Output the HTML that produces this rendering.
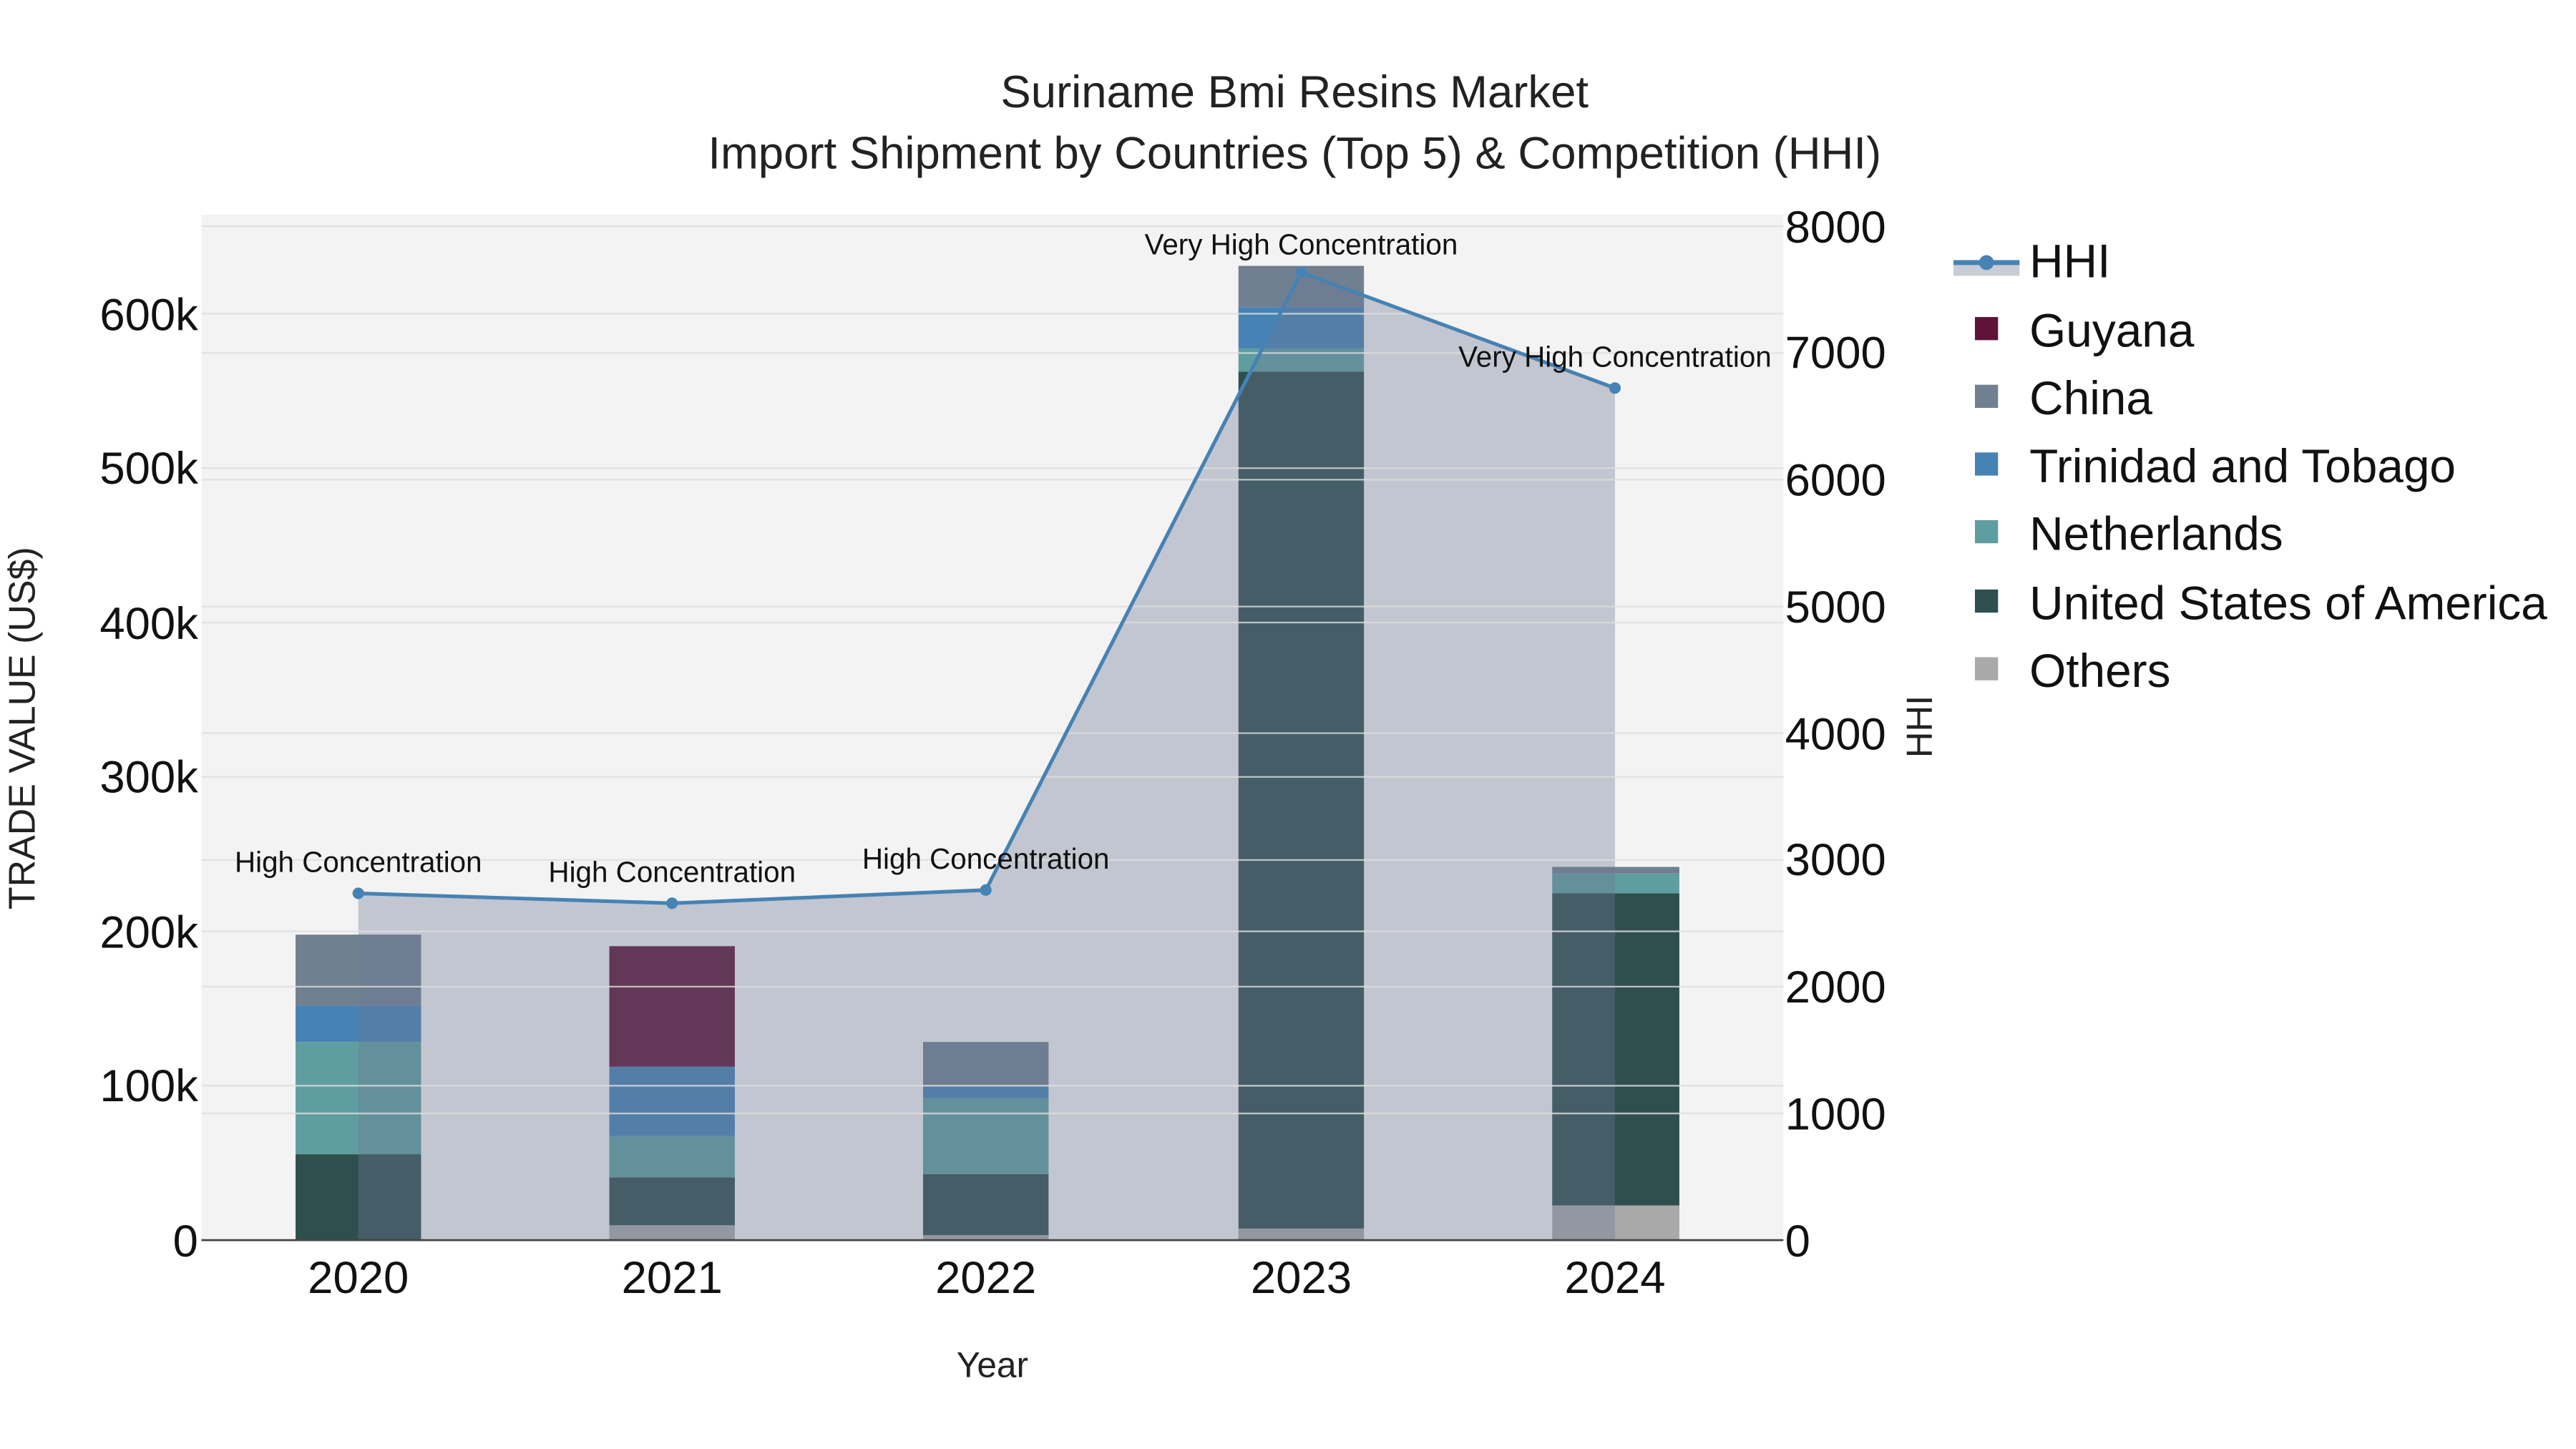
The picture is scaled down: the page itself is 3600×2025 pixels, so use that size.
<!DOCTYPE html>
<html><head><meta charset="utf-8"><style>
html,body{margin:0;padding:0;background:#fff;}
svg{display:block;font-family:"Liberation Sans",sans-serif;}
</style></head><body>
<svg width="3600" height="2025" viewBox="0 0 1560 877.5" xmlns="http://www.w3.org/2000/svg">
<rect width="1560" height="877.5" fill="#fff"/>
<rect x="122" y="130" width="958" height="621" fill="#f3f3f3"/>
<g>
<rect x="179" y="699" width="76" height="52" fill="#2f4f4f"/>
<rect x="179" y="631" width="76" height="68" fill="#5f9ea0"/>
<rect x="179" y="609" width="76" height="22" fill="#4682b4"/>
<rect x="179" y="566" width="76" height="43" fill="#708090"/>
<rect x="369" y="742" width="76" height="9" fill="#a9a9a9"/>
<rect x="369" y="713" width="76" height="29" fill="#2f4f4f"/>
<rect x="369" y="688" width="76" height="25" fill="#5f9ea0"/>
<rect x="369" y="646" width="76" height="42" fill="#4682b4"/>
<rect x="369" y="573" width="76" height="73" fill="#5e1336"/>
<rect x="559" y="748" width="76" height="3" fill="#a9a9a9"/>
<rect x="559" y="711" width="76" height="37" fill="#2f4f4f"/>
<rect x="559" y="665" width="76" height="46" fill="#5f9ea0"/>
<rect x="559" y="658" width="76" height="7" fill="#4682b4"/>
<rect x="559" y="631" width="76" height="27" fill="#708090"/>
<rect x="750" y="744" width="76" height="7" fill="#a9a9a9"/>
<rect x="750" y="225" width="76" height="519" fill="#2f4f4f"/>
<rect x="750" y="211" width="76" height="14" fill="#5f9ea0"/>
<rect x="750" y="186" width="76" height="25" fill="#4682b4"/>
<rect x="750" y="161" width="76" height="25" fill="#708090"/>
<rect x="940" y="730" width="77" height="21" fill="#a9a9a9"/>
<rect x="940" y="541" width="77" height="189" fill="#2f4f4f"/>
<rect x="940" y="529" width="77" height="12" fill="#5f9ea0"/>
<rect x="940" y="525" width="77" height="4" fill="#708090"/>
</g>
<polygon points="217,541 407,547 597,539 788,165 978,235 978,751 217,751" fill="rgb(108,120,146)" fill-opacity="0.36"/>
<g stroke="#dedede" stroke-width="1" opacity="0.8">
<line x1="122" x2="1080" y1="657.5" y2="657.5"/>
<line x1="122" x2="1080" y1="564" y2="564"/>
<line x1="122" x2="1080" y1="470.5" y2="470.5"/>
<line x1="122" x2="1080" y1="377" y2="377"/>
<line x1="122" x2="1080" y1="283.5" y2="283.5"/>
<line x1="122" x2="1080" y1="190" y2="190"/>
<line x1="122" x2="1080" y1="674.3" y2="674.3"/>
<line x1="122" x2="1080" y1="597.5" y2="597.5"/>
<line x1="122" x2="1080" y1="520.8" y2="520.8"/>
<line x1="122" x2="1080" y1="444" y2="444"/>
<line x1="122" x2="1080" y1="367.3" y2="367.3"/>
<line x1="122" x2="1080" y1="290.5" y2="290.5"/>
<line x1="122" x2="1080" y1="213.8" y2="213.8"/>
<line x1="122" x2="1080" y1="137" y2="137"/>
</g>
<line x1="122" x2="1080" y1="751" y2="751" stroke="#444" stroke-width="1.2"/>
<polyline points="217,541 407,547 597,539 788,165 978,235" fill="none" stroke="#4682b4" stroke-width="2.2"/>
<g fill="#4682b4"><circle cx="217" cy="541" r="3.5"/><circle cx="407" cy="547" r="3.5"/><circle cx="597" cy="539" r="3.5"/><circle cx="788" cy="165" r="3.5"/><circle cx="978" cy="235" r="3.5"/></g>
<g font-size="17.5" fill="#111" text-anchor="middle">
<text x="217" y="528">High Concentration</text>
<text x="407" y="534">High Concentration</text>
<text x="597" y="526">High Concentration</text>
<text x="788" y="154">Very High Concentration</text>
<text x="978" y="222">Very High Concentration</text>
</g>
<g font-size="27.5" fill="#222" text-anchor="middle">
<text x="784" y="65">Suriname Bmi Resins Market</text>
<text x="784" y="102">Import Shipment by Countries (Top 5) &amp; Competition (HHI)</text>
</g>
<g font-size="27.5" fill="#111" text-anchor="end">
<text x="120" y="761">0</text>
<text x="120" y="667">100k</text>
<text x="120" y="574">200k</text>
<text x="120" y="480">300k</text>
<text x="120" y="387">400k</text>
<text x="120" y="293">500k</text>
<text x="120" y="200">600k</text>
</g>
<g font-size="27.5" fill="#111">
<text x="1081" y="761">0</text>
<text x="1081" y="684">1000</text>
<text x="1081" y="607">2000</text>
<text x="1081" y="530">3000</text>
<text x="1081" y="454">4000</text>
<text x="1081" y="377">5000</text>
<text x="1081" y="300">6000</text>
<text x="1081" y="223">7000</text>
<text x="1081" y="147">8000</text>
</g>
<g font-size="27.5" fill="#111" text-anchor="middle">
<text x="217" y="783">2020</text>
<text x="407" y="783">2021</text>
<text x="597" y="783">2022</text>
<text x="788" y="783">2023</text>
<text x="978" y="783">2024</text>
</g>
<text x="601" y="834" font-size="21.5" fill="#222" text-anchor="middle">Year</text>
<text transform="translate(21,441) rotate(-90)" font-size="22.5" fill="#222" text-anchor="middle">TRADE VALUE (US$)</text>
<text transform="translate(1170,440) rotate(-90)" font-size="22" fill="#222" text-anchor="middle">HHI</text>
<rect x="1183" y="159" width="40" height="8" fill="#c8ccd4"/>
<line x1="1183" x2="1223" y1="159" y2="159" stroke="#4682b4" stroke-width="3"/>
<circle cx="1203" cy="159" r="4.5" fill="#4682b4"/>
<g>
<rect x="1196" y="192" width="14" height="14" fill="#5e1336"/>
<rect x="1196" y="233" width="14" height="14" fill="#708090"/>
<rect x="1196" y="274" width="14" height="14" fill="#4682b4"/>
<rect x="1196" y="315" width="14" height="14" fill="#5f9ea0"/>
<rect x="1196" y="357" width="14" height="14" fill="#2f4f4f"/>
<rect x="1196" y="398" width="14" height="14" fill="#a9a9a9"/>
</g>
<g font-size="28.5" fill="#111">
<text x="1229" y="168">HHI</text>
<text x="1229" y="210">Guyana</text>
<text x="1229" y="251">China</text>
<text x="1229" y="292">Trinidad and Tobago</text>
<text x="1229" y="333">Netherlands</text>
<text x="1229" y="375">United States of America</text>
<text x="1229" y="416">Others</text>
</g>
</svg>
</body></html>
